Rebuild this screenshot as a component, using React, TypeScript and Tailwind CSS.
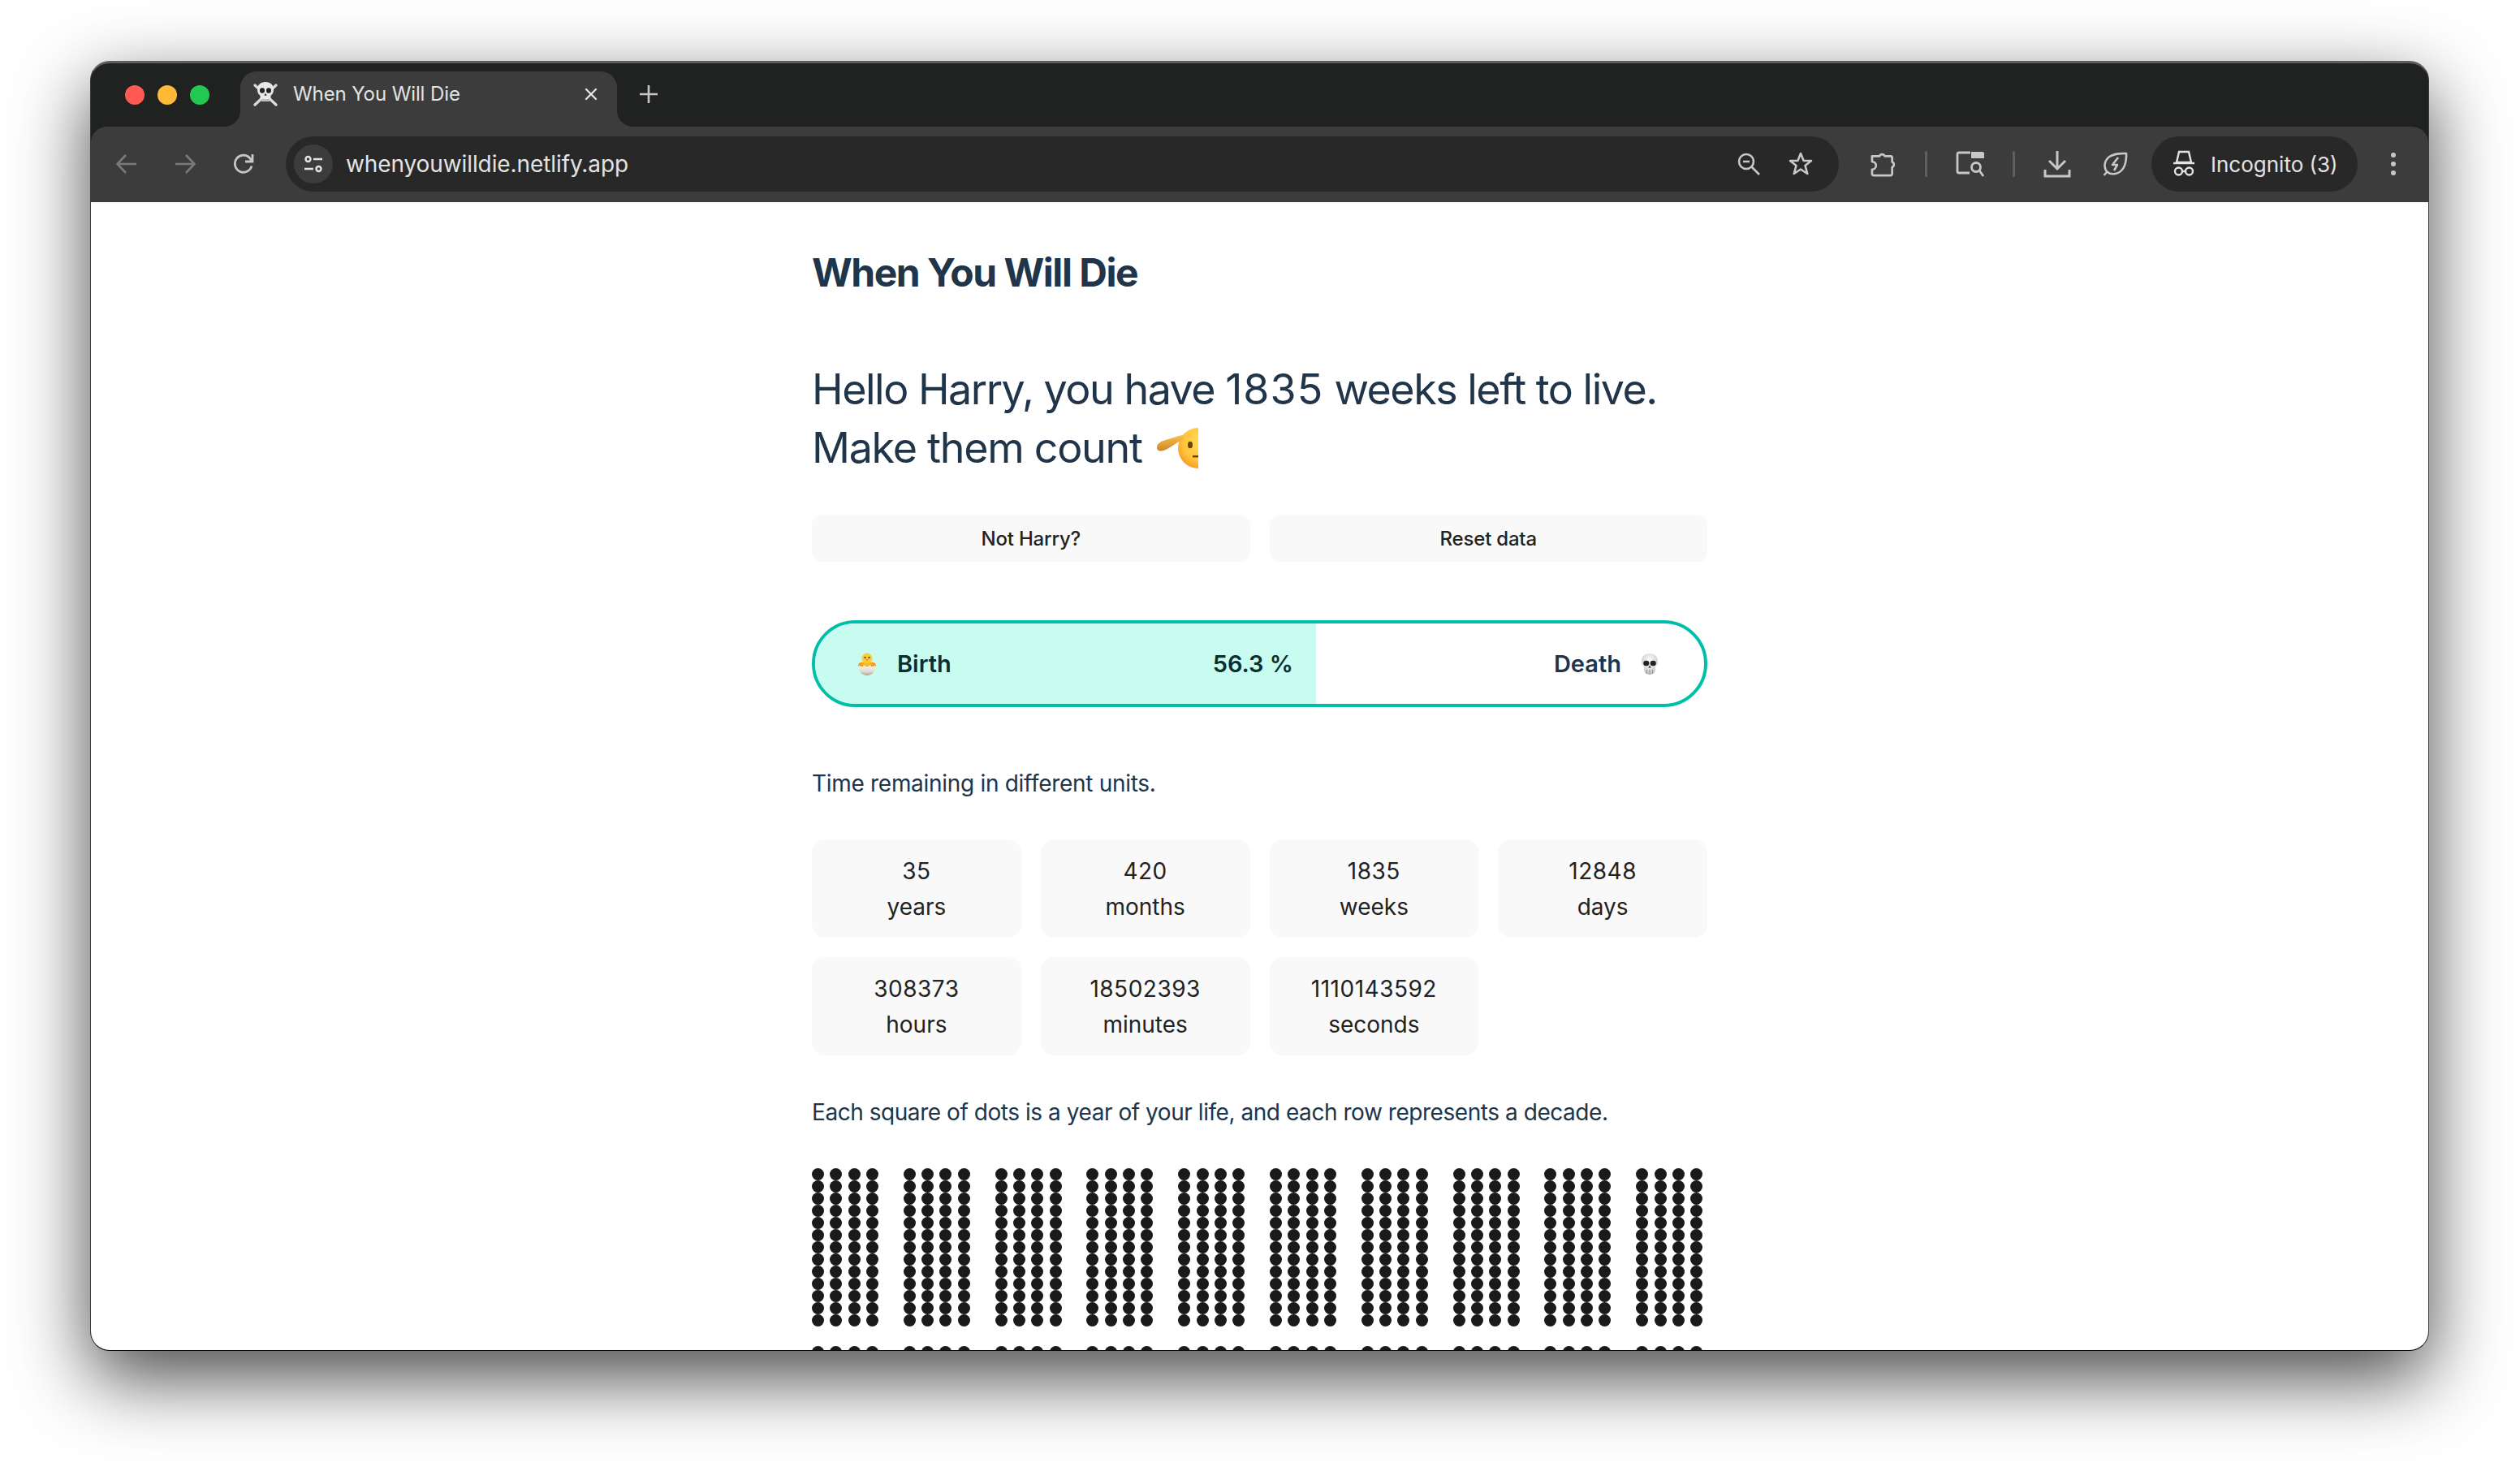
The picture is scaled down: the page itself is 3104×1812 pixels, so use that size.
import React from 'react';

const stats = [
  ['35', 'years'],
  ['420', 'months'],
  ['1835', 'weeks'],
  ['12848', 'days'],
  ['308373', 'hours'],
  ['18502393', 'minutes'],
  ['1110143592', 'seconds'],
];

const SkullCrossbones = () => (
  <svg width="32" height="32" viewBox="0 0 32 32">
    <g stroke="#d9d9d9" strokeWidth="3.4" strokeLinecap="round">
      <path d="M3 5 L29 29" />
      <path d="M29 5 L3 29" />
    </g>
    <path d="M16 1c6.500 0 10 4 10 9.500 0 3.500-1.500 6-3.500 7.300V22h-13v-4.200C7.500 16.500 6 14 6 10.500 6 5 9.500 1 16 1z" fill="#e8e8e8" />
    <ellipse cx="12" cy="11.500" rx="3" ry="3.200" fill="#222" />
    <ellipse cx="20" cy="11.500" rx="3" ry="3.200" fill="#222" />
    <path d="M16 14.500l1.600 3.200h-3.200z" fill="#333" />
    <path d="M11 22h10v3H11z" fill="#bdbdbd" />
  </svg>
);

const Chick = () => (
  <svg width="30" height="30" viewBox="0 0 30 30">
    <defs>
      <linearGradient id="eggFill" x1="0" y1="0" x2="0" y2="1">
        <stop offset="0%" stopColor="#f7f3ec" />
        <stop offset="60%" stopColor="#e2dcd2" />
        <stop offset="100%" stopColor="#a9a297" />
      </linearGradient>
    </defs>
    <path d="M5 14c3-2 6-1 10-1s7-1 10 1c.8 1.500 1 3 1 4H4c0-1 .2-2.500 1-4z" fill="#f39a1a" />
    <circle cx="15" cy="8" r="6.500" fill="#fccb35" />
    <path d="M9 14c2-1 4 0 6 0s4-1 6 0l-1 3H10z" fill="#fbb724" />
    <circle cx="12.500" cy="7" r="1.100" fill="#3d2c0e" />
    <circle cx="17.500" cy="7" r="1.100" fill="#3d2c0e" />
    <path d="M13.300 9.300h3.400l-1.700 2z" fill="#ee7f14" />
    <path d="M5 16.500l3.500 2 3.200-2 3.300 2 3.300-2 3.200 2 3.500-2C26 24 21.500 29 15 29S4 24 5 16.500z" fill="url(#eggFill)" />
  </svg>
);

const Skull = () => (
  <svg width="30" height="30" viewBox="0 0 30 30">
    <defs>
      <radialGradient id="skullShade" cx="50%" cy="35%" r="65%">
        <stop offset="0%" stopColor="#ffffff" />
        <stop offset="100%" stopColor="#c4c4c4" />
      </radialGradient>
    </defs>
    <path d="M15 2c6.500 0 10 4 10 9.500 0 3-1.200 5.200-3 6.500v4c0 3-3 6-7 6s-7-3-7-6v-4c-1.800-1.300-3-3.500-3-6.500C5 6 8.500 2 15 2z" fill="url(#skullShade)" />
    <ellipse cx="10.800" cy="14" rx="3.600" ry="3.300" fill="#222" />
    <ellipse cx="19.200" cy="14" rx="3.600" ry="3.300" fill="#222" />
    <path d="M15 16.500l1.700 3h-3.400z" fill="#333" />
    <path d="M11.500 22v5M15 22v6M18.500 22v5" stroke="#8a8a8a" strokeWidth="0.9" />
  </svg>
);

const Salute = () => (
  <svg width="52" height="50" viewBox="0 0 52 50">
    <defs>
      <radialGradient id="faceFill" cx="60%" cy="35%" r="70%">
        <stop offset="0%" stopColor="#ffe15c" />
        <stop offset="70%" stopColor="#ffc238" />
        <stop offset="100%" stopColor="#f49a25" />
      </radialGradient>
      <linearGradient id="handFill" x1="0" y1="0" x2="0" y2="1">
        <stop offset="0%" stopColor="#f8c052" />
        <stop offset="100%" stopColor="#cf8722" />
      </linearGradient>
    </defs>
    <circle cx="52" cy="25" r="25" fill="url(#faceFill)" />
    <path d="M1 24c0-5 6-8 12-9.500 6-1.500 12-4 19-5.500 2 .5 2.500 3 1 4.500-4 3.500-10 6.500-15 10C13 27 8 29 4.500 28.500 2 28 1 26.500 1 24z" fill="url(#handFill)" />
    <ellipse cx="42" cy="21" rx="3" ry="4.300" fill="#6a4310" />
    <path d="M45 34h7v2.500h-7z" fill="#6a4310" />
  </svg>
);

const iconStroke = '#c7c7c7';

const Dots = () => (
  <div className="grid w-[82px] grid-cols-[repeat(4,15px)] justify-between">
    {Array.from({ length: 52 }).map((_, i) => (
      <div key={i} className="h-[15px] w-[15px] rounded-full bg-[#1a1a1a]" />
    ))}
  </div>
);

const Window = () => (
  <div className="flex h-[1589px] w-[2881px] flex-col overflow-hidden rounded-[24px] border-x border-b border-t-[3px] border-b-black border-l-[#3a3a3a] border-r-[#3a3a3a] border-t-[#5e5e5e] bg-[#202221] shadow-[0_33px_92px_rgba(0,0,0,0.72)]">
    {/* tab strip */}
    <div className="flex h-[78px] shrink-0 items-end pl-[42px]">
      <div className="mb-[27px] flex gap-4">
        <div className="h-6 w-6 rounded-full bg-[#ff5a52]" />
        <div className="h-6 w-6 rounded-full bg-[#ffbb38]" />
        <div className="h-6 w-6 rounded-full bg-[#22c84f]" />
      </div>
      <div className="relative ml-[38px] flex h-[68px] w-[464px] items-center rounded-t-[20px] bg-[#3c3c3c] pb-[12px] pl-[15px]">
        <div className="absolute -left-5 bottom-0 h-5 w-5 bg-[#3c3c3c]">
          <div className="h-full w-full rounded-br-[20px] bg-[#202221]" />
        </div>
        <div className="absolute -right-5 bottom-0 h-5 w-5 bg-[#3c3c3c]">
          <div className="h-full w-full rounded-bl-[20px] bg-[#202221]" />
        </div>
        <SkullCrossbones />
        <span className="ml-[18px] font-['Inter'] text-[24px] tracking-[-0.1px] text-[#e3e3e3]">When You Will Die</span>
        <svg className="absolute left-[422px] top-[18px]" width="20" height="20" viewBox="0 0 20 20" stroke="#e3e3e3" strokeWidth="2.400" strokeLinecap="round">
          <path d="M4 4 L16 16M16 4 L4 16" />
        </svg>
      </div>
      <svg className="mb-[28px] ml-[27px]" width="24" height="24" viewBox="0 0 24 24" stroke="#c7c7c7" strokeWidth="2.600">
        <path d="M12 1V23M1 12H23" />
      </svg>
    </div>

    {/* toolbar */}
    <div className="flex h-[93px] shrink-0 items-center rounded-t-[20px] bg-[#3c3c3c] pb-[1px] pl-[8px]">
      <div className="flex h-[68px] w-[72px] items-center justify-center">
        <svg width="30" height="30" viewBox="0 0 30 30" fill="none" stroke="#7a7a7a" strokeWidth="2.600">
          <path d="M27 15H4M14 4L3.500 15L14 26" />
        </svg>
      </div>
      <div className="flex h-[68px] w-[72px] items-center justify-center">
        <svg width="30" height="30" viewBox="0 0 30 30" fill="none" stroke="#7a7a7a" strokeWidth="2.600">
          <path d="M3 15H26M16 4L26.500 15L16 26" />
        </svg>
      </div>
      <div className="flex h-[68px] w-[72px] items-center justify-center">
        <svg width="30" height="30" viewBox="0 0 30 30" fill="none" stroke={iconStroke} strokeWidth="2.800">
          <path d="M25 17.500A10.500 10.500 0 1 1 22.500 7.500L25.500 11" />
          <path d="M26 3V12H17" />
        </svg>
      </div>
      <div className="ml-[16px] flex h-[68px] w-[1913px] items-center rounded-full bg-[#282828] pl-[10px] pr-[32px]">
        <div className="flex h-[48px] w-[48px] items-center justify-center rounded-full bg-[#3c3c3c]">
          <svg width="26" height="26" viewBox="0 0 26 26" fill="none" stroke="#e3e3e3" strokeWidth="2.400">
            <circle cx="6.500" cy="7" r="3" />
            <circle cx="19.500" cy="19" r="3" />
            <path d="M13 7H24M2 19H13" />
          </svg>
        </div>
        <span className="ml-[16px] flex-1 font-['Inter'] text-[28px] tracking-[-0.1px] text-[#e3e3e3]">whenyouwilldie.netlify.app</span>
        <svg className="mr-[33px]" width="30" height="30" viewBox="0 0 30 30" fill="none" stroke={iconStroke} strokeWidth="2.600">
          <circle cx="12" cy="12" r="9" />
          <path d="M18.500 18.500L28 28M8 12H16" />
        </svg>
        <svg className="-mr-[1px]" width="32" height="32" viewBox="0 0 32 32" fill="none" stroke={iconStroke} strokeWidth="2.600" strokeLinejoin="round">
          <path d="M16 3L19.600 12H29L21.500 18L24.300 28L16 22.500L7.700 28L10.500 18L3 12H12.400Z" />
        </svg>
      </div>
      <div className="ml-[38px] flex w-[32px] items-center justify-center">
        <svg width="33" height="33" viewBox="0 0 33 33" fill="none" stroke={iconStroke} strokeWidth="2.800" strokeLinejoin="round">
          <path d="M3 6H12.500A3.500 3.500 0 0 1 19 6H27A2 2 0 0 1 28.500 7.500V13.500A3.500 3.500 0 0 1 28.500 20V29A2 2 0 0 1 27 30.500H5A2 2 0 0 1 3 29V23A5 5 0 0 0 3 13Z" />
        </svg>
      </div>
      <div className="ml-[36px] h-[32px] w-[3px] rounded-full bg-[#5f5f5f]" />
      <div className="ml-[35px] flex w-[36px] items-center justify-center">
        <svg width="36" height="32" viewBox="0 0 36 32" fill="none" stroke={iconStroke} strokeWidth="2.800">
          <path d="M17 27H4A2 2 0 0 1 2 25V4A2 2 0 0 1 4 2H18" />
          <path d="M19 1H33A2 2 0 0 1 35 3V9H19Z" fill={iconStroke} stroke="none" />
          <circle cx="25" cy="20" r="5.500" />
          <path d="M29 24L34 31" />
        </svg>
      </div>
      <div className="ml-[34px] h-[32px] w-[3px] rounded-full bg-[#5f5f5f]" />
      <div className="ml-[35px] flex w-[34px] items-center justify-center">
        <svg width="34" height="34" viewBox="0 0 34 34" fill="none" stroke={iconStroke} strokeWidth="3">
          <path d="M17 1V22M7 13L17 23L27 13" />
          <path d="M2 24V32H32V24" />
        </svg>
      </div>
      <div className="ml-[39px] flex w-[32px] items-center justify-center">
        <svg width="32" height="32" viewBox="0 0 32 32" fill="none" stroke={iconStroke} strokeWidth="2.600" strokeLinejoin="round">
          <path d="M29 3C29 3 12 2 6 9C0 16 3 24 6 26C9 29 18 30 24 23C30 16 29 3 29 3Z" />
          <path d="M1.500 30L5 26" />
          <path d="M19 8L12 17H18L14 24" />
        </svg>
      </div>
      <div className="ml-[28px] flex h-[68px] w-[254px] items-center rounded-full bg-[#282828] pl-[26px]">
        <svg width="28" height="34" viewBox="0 0 28 34" fill="none" stroke="#e3e3e3" strokeWidth="2.400">
          <path d="M8 2H20L23 15H5Z" />
          <path d="M1 16H27" />
          <circle cx="7.500" cy="26" r="4.500" />
          <circle cx="20.500" cy="26" r="4.500" />
          <path d="M12 26H16" />
        </svg>
        <span className="ml-[19px] font-['Inter'] text-[26px] text-[#e3e3e3]">Incognito (3)</span>
      </div>
      <div className="ml-[41px] flex flex-col gap-[5px]">
        <div className="h-[6px] w-[6px] rounded-full bg-[#c7c7c7]" />
        <div className="h-[6px] w-[6px] rounded-full bg-[#c7c7c7]" />
        <div className="h-[6px] w-[6px] rounded-full bg-[#c7c7c7]" />
      </div>
    </div>

    {/* page */}
    <div className="min-h-0 flex-1 overflow-hidden bg-white font-['Inter']">
      <div className="mx-auto w-[1103px] pt-[51px] text-[#20344a]">
        <h1 className="text-[48px] font-bold leading-[72px] tracking-[-1.5px]">When You Will Die</h1>
        <h2 className="mt-[72px] text-[52px] font-normal leading-[72px] tracking-[-1.5px]">
          <div>
            Hello Harry, you have <span className="tracking-[1px]">1835</span> weeks left to live.
          </div>
          <div className="flex items-center tracking-[-1.3px]">
            Make them count
            <span className="ml-[17px]">
              <Salute />
            </span>
          </div>
        </h2>

        <div className="mt-[46px] grid grid-cols-2 gap-6">
          <div className="flex h-[58px] items-center justify-center rounded-[12px] bg-[#f9f9f9] pt-[1px] text-[24px] font-medium tracking-[-0.2px] text-[#222]">Not Harry?</div>
          <div className="flex h-[58px] items-center justify-center rounded-[12px] bg-[#f9f9f9] pt-[1px] text-[24px] font-medium tracking-[-0.2px] text-[#222]">Reset data</div>
        </div>

        <div className="mt-[72px] flex h-[107px] overflow-hidden rounded-full border-4 border-[#00bfa8] text-[29px] font-semibold">
          <div className="flex w-[617px] items-center justify-between bg-[#c8fcf0] pl-[49px] pr-[28px] text-[#0b2f30]">
            <span className="flex items-center gap-[22px]">
              <Chick />
              Birth
            </span>
            <span>56.3 %</span>
          </div>
          <div className="flex flex-1 items-center justify-end gap-[20px] pr-[52px]">
            <span>Death</span>
            <Skull />
          </div>
        </div>

        <p className="mt-[72px] text-[28px] leading-[44px] tracking-[-0.3px]">Time remaining in different units.</p>

        <div className="mt-[47px] grid grid-cols-4 gap-6">
          {stats.map(([value, unit]) => (
            <div key={unit} className="flex h-[121px] flex-col items-center justify-center rounded-[16px] bg-[#f9f9f9] pt-[1px] text-[28px] leading-[44px] text-[#222]">
              <span className="tracking-[0.5px]">{value}</span>
              <span>{unit}</span>
            </div>
          ))}
        </div>

        <p className="mt-[48px] text-[28px] leading-[44px] tracking-[-0.45px]">Each square of dots is a year of your life, and each row represents a decade.</p>

        <div className="mt-[47px] flex flex-wrap gap-x-[30.8px] gap-y-[24px]">
          {Array.from({ length: 20 }).map((_, i) => (
            <Dots key={i} />
          ))}
        </div>
      </div>
    </div>
  </div>
);

const App: React.FC = () => {
  return (
    <div className="h-[1812px] w-[3104px] overflow-hidden bg-white pl-[111px] pt-[75px]">
      <Window />
    </div>
  );
};

export default App;
